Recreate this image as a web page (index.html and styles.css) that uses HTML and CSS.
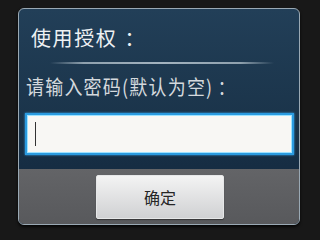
FILE: index.html
```html
<!DOCTYPE html>
<html lang="zh-CN">
<head>
<meta charset="utf-8">
<link rel="stylesheet" href="styles.css">
</head>
<body>
<div class="dialog">
  <div class="title">使用授权<span class="colon">：</span></div>
  <div class="sep"></div>
  <div class="label">请输入密码(默认为空)<span class="colon">：</span></div>
  <div class="input"><span class="caret"></span></div>
  <div class="footer">
    <div class="btn">确定</div>
  </div>
</div>
</body>
</html>
```
FILE: styles.css
```css
html, body {
  margin: 0;
  padding: 0;
  background: #181818;
  width: 316px;
  height: 236px;
  overflow: hidden;
  font-family: "Noto Sans CJK SC", "Noto Sans", sans-serif;
}
body {
  padding: 8px 0 0 18px;
  box-sizing: border-box;
}
.dialog {
  width: 282px;
  height: 217px;
  box-sizing: border-box;
  border: 1px solid #9aa9b4;
  border-radius: 6px;
  background: linear-gradient(#223f58 0%, #1a3349 55%, #10243a 100%);
  box-shadow: 0 2px 3px rgba(0,0,0,0.8);
  overflow: hidden;
  display: flex;
  flex-direction: column;
}
.title {
  margin-top: 16px;
  padding-left: 12px;
  font-size: 20px;
  line-height: 26px;
  letter-spacing: 1.6px;
  color: #eef1f3;
}
.title .colon {
  margin-left: 7px;
}
.sep {
  margin: 11px 0 0 31px;
  width: 224px;
  height: 2px;
  background: linear-gradient(90deg, rgba(160,176,188,0) 0%, #8fa1ae 15%, #a3b3bf 50%, #8fa1ae 85%, rgba(160,176,188,0) 100%);
}
.label {
  margin-top: 9px;
  padding-left: 7px;
  font-size: 18px;
  line-height: 26px;
  letter-spacing: 1.2px;
  color: #d4d9dd;
  white-space: nowrap;
  transform: scaleY(1.12);
  transform-origin: left center;
}
.label .colon {
  margin-left: 4px;
}
.input {
  margin: 14px 0 0 6px;
  width: 269px;
  height: 42px;
  box-sizing: border-box;
  border: 2px solid #2b9be0;
  background: #f8f7f4;
  box-shadow: inset 0 0 0 1px #9fe3ff, 0 0 2px #3aa8f0;
  display: flex;
  align-items: center;
  padding-left: 8px;
}
.caret {
  width: 1px;
  height: 24px;
  background: #333;
}
.footer {
  margin-top: 14px;
  flex: 1;
  background: linear-gradient(#636467, #58595c);
  display: flex;
  justify-content: center;
  padding-top: 6px;
  box-sizing: border-box;
}
.btn {
  width: 128px;
  height: 44px;
  box-sizing: border-box;
  border: 1px solid #e6e7e8;
  border-radius: 2px;
  background: linear-gradient(#f3f3f3, #d0d1d3);
  box-shadow: 0 1px 1px rgba(0,0,0,0.4);
  color: #262626;
  font-size: 16px;
  display: flex;
  align-items: center;
  justify-content: center;
  margin-left: 2px;
}
```
